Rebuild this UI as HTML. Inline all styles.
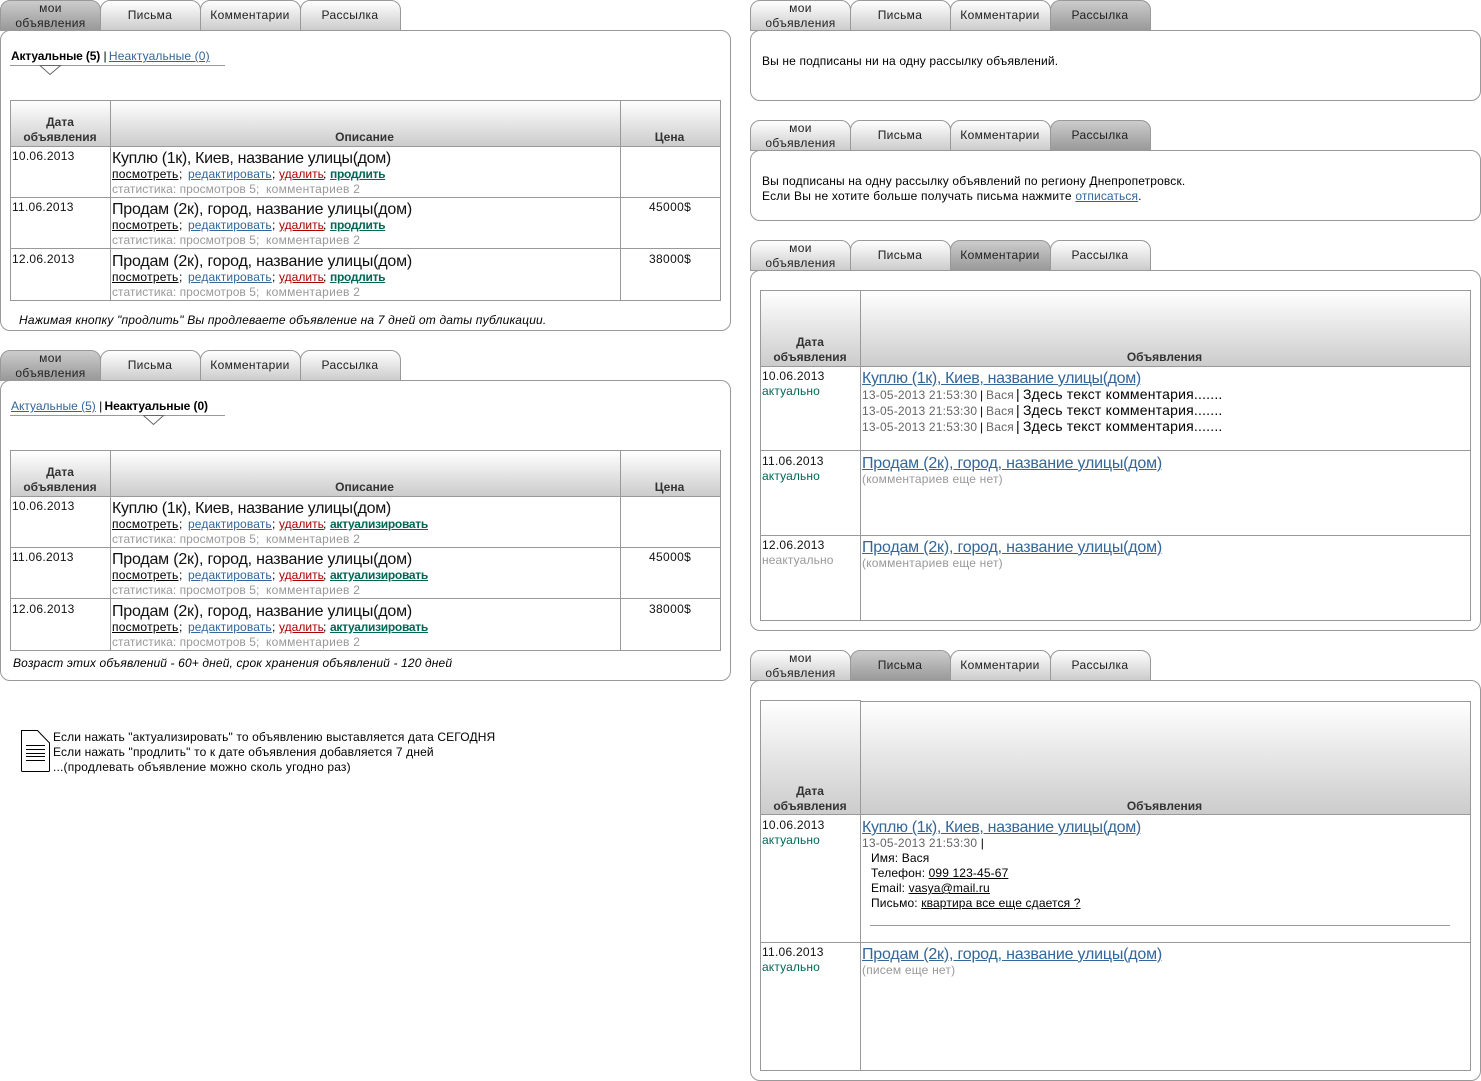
<!DOCTYPE html>
<html><head><meta charset="utf-8"><style>
html,body{margin:0;padding:0;background:#fff;width:1481px;height:1081px;overflow:hidden}
body{position:relative;font-family:"Liberation Sans",Arial,sans-serif;font-size:12px;color:#000}
.a,.tab,.p,.h,.l,.t,.d,.n,.k,.s,.x,.m,.z,.g{position:absolute;white-space:nowrap;box-sizing:border-box}
.tab{width:101px;height:31px;border:1px solid #999;border-radius:10px 10px 0 0;background:linear-gradient(#fff,#ccc);text-align:center;line-height:15px;color:#222;z-index:1;letter-spacing:.35px;padding:7px 1px 0 0}
.tab.two{padding:0}
.on{background:linear-gradient(#ccc,#999)}
.p{border:1px solid #999;border-radius:10px;background:#fff;z-index:2}
.h{background:linear-gradient(#fff,#ccc);border:1px solid #999;height:47px}
.l{background:#999}
.t{line-height:15px;z-index:3;margin-top:1px}
.d{line-height:15px;color:#111;letter-spacing:.25px;z-index:3;margin-top:1px}
.v{letter-spacing:.35px}
.c{letter-spacing:.13px}
.n{font-size:16px;line-height:18px;color:#111;z-index:3;letter-spacing:-.34px;margin-top:1px}
.n.q{letter-spacing:-.2px}
.n.u{text-decoration:underline;color:#336699}
.k{line-height:15px;text-decoration:underline;z-index:3;letter-spacing:.25px;margin-top:1px}
.k.b{letter-spacing:.13px}
.k.r{letter-spacing:.02px}
.k.g2{letter-spacing:-.3px}
.k.g4{letter-spacing:-.28px}
.s{line-height:15px;color:#999;letter-spacing:.2px;z-index:3;margin-top:1px}
.b{color:#336699}.r{color:#a80000}.g2{color:#006655;font-weight:bold}
.x{font-weight:bold;color:#333;text-align:center;line-height:15px;z-index:3;margin:1px 0 0 -1px}
.x.y{margin-left:0}
.m5{color:#666;letter-spacing:.2px}
.s i{font-style:normal;letter-spacing:.05px}
.s em{font-style:normal;letter-spacing:.28px}
.f{font-size:14px;letter-spacing:.2px}
u{text-decoration:underline}
</style></head><body>

<div class="tab two on" style="left:0;top:0">мои<br>объявления</div><div class="tab" style="left:100px;top:0">Письма</div><div class="tab" style="left:200px;top:0">Комментарии</div><div class="tab" style="left:300px;top:0">Рассылка</div>
<div class="p" style="left:0;top:30px;width:731px;height:301px"></div>
<div class="t" style="left:11px;top:48px"><b style="letter-spacing:-.15px">Актуальные (5)</b> | <u class="b" style="letter-spacing:.13px;margin-left:-1px">Неактуальные (0)</u></div>
<div class="l" style="left:10px;top:65px;width:215px;height:1px;z-index:3"></div>
<svg class="a" style="left:39px;top:65px;z-index:4" width="23" height="11"><path d="M1 0.5 H21.5 L11 9.5 Z" fill="#fff" stroke="#666"/></svg>
<div class="h" style="left:10px;top:100px;width:711px;z-index:3"></div>
<div class="l" style="left:10px;top:146px;width:711px;height:1px;z-index:3"></div>
<div class="l" style="left:10px;top:197px;width:711px;height:1px;z-index:3"></div>
<div class="l" style="left:10px;top:248px;width:711px;height:1px;z-index:3"></div>
<div class="l" style="left:10px;top:300px;width:711px;height:1px;z-index:3"></div>
<div class="l" style="left:10px;top:100px;width:1px;height:200px;z-index:3"></div>
<div class="l" style="left:110px;top:100px;width:1px;height:200px;z-index:3"></div>
<div class="l" style="left:620px;top:100px;width:1px;height:200px;z-index:3"></div>
<div class="l" style="left:720px;top:100px;width:1px;height:200px;z-index:3"></div>
<div class="x y" style="left:11px;top:114px;width:98px">Дата<br>объявления</div><div class="x" style="left:111px;top:129px;width:509px">Описание</div><div class="x" style="left:621px;top:129px;width:99px">Цена</div>

<div class="d" style="left:12px;top:148px">10.06.2013</div><div class="n" style="left:112px;top:149px">Куплю (1к), Киев, название улицы(дом)</div>
<div class="k" style="left:112px;top:166px">посмотреть</div><div class="t" style="left:179px;top:166px">;</div><div class="k b" style="left:188px;top:166px">редактировать</div><div class="t" style="left:272px;top:166px">;</div><div class="k r" style="left:279px;top:166px">удалить</div><div class="t" style="left:323px;top:166px">;</div><div class="k g2" style="left:330px;top:166px">продлить</div>
<div class="s" style="left:112px;top:181px"><i>статистика: просмотров 5;</i><span style="position:absolute;left:154px;top:0"><em>комментариев 2</em></span></div>

<div class="d" style="left:12px;top:199px">11.06.2013</div><div class="n q" style="left:112px;top:200px">Продам (2к), город, название улицы(дом)</div>
<div class="k" style="left:112px;top:217px">посмотреть</div><div class="t" style="left:179px;top:217px">;</div><div class="k b" style="left:188px;top:217px">редактировать</div><div class="t" style="left:272px;top:217px">;</div><div class="k r" style="left:279px;top:217px">удалить</div><div class="t" style="left:323px;top:217px">;</div><div class="k g2" style="left:330px;top:217px">продлить</div>
<div class="s" style="left:112px;top:232px"><i>статистика: просмотров 5;</i><span style="position:absolute;left:154px;top:0"><em>комментариев 2</em></span></div>
<div class="d v" style="left:649px;top:199px">45000$</div>

<div class="d" style="left:12px;top:251px">12.06.2013</div><div class="n q" style="left:112px;top:252px">Продам (2к), город, название улицы(дом)</div>
<div class="k" style="left:112px;top:269px">посмотреть</div><div class="t" style="left:179px;top:269px">;</div><div class="k b" style="left:188px;top:269px">редактировать</div><div class="t" style="left:272px;top:269px">;</div><div class="k r" style="left:279px;top:269px">удалить</div><div class="t" style="left:323px;top:269px">;</div><div class="k g2" style="left:330px;top:269px">продлить</div>
<div class="s" style="left:112px;top:284px"><i>статистика: просмотров 5;</i><span style="position:absolute;left:154px;top:0"><em>комментариев 2</em></span></div>
<div class="d v" style="left:649px;top:251px">38000$</div>
<div class="t" style="left:19px;top:312px;font-style:italic;letter-spacing:.175px">Нажимая кнопку "продлить" Вы продлеваете объявление на 7 дней от даты публикации.</div>

<div class="tab two on" style="left:0;top:350px">мои<br>объявления</div><div class="tab" style="left:100px;top:350px">Письма</div><div class="tab" style="left:200px;top:350px">Комментарии</div><div class="tab" style="left:300px;top:350px">Рассылка</div>
<div class="p" style="left:0;top:380px;width:731px;height:301px"></div>
<div class="t" style="left:11px;top:398px"><u class="b" style="letter-spacing:0">Актуальные (5)</u> | <b style="letter-spacing:-.07px;margin-left:-1px">Неактуальные (0)</b></div>
<div class="l" style="left:10px;top:415px;width:215px;height:1px;z-index:3"></div>
<svg class="a" style="left:143px;top:415px;z-index:4" width="23" height="11"><path d="M0.5 0.5 H20.5 L10.5 9.5 Z" fill="#fff" stroke="#666"/></svg>
<div class="h" style="left:10px;top:450px;width:711px;z-index:3"></div>
<div class="l" style="left:10px;top:496px;width:711px;height:1px;z-index:3"></div>
<div class="l" style="left:10px;top:547px;width:711px;height:1px;z-index:3"></div>
<div class="l" style="left:10px;top:598px;width:711px;height:1px;z-index:3"></div>
<div class="l" style="left:10px;top:650px;width:711px;height:1px;z-index:3"></div>
<div class="l" style="left:10px;top:450px;width:1px;height:200px;z-index:3"></div>
<div class="l" style="left:110px;top:450px;width:1px;height:200px;z-index:3"></div>
<div class="l" style="left:620px;top:450px;width:1px;height:200px;z-index:3"></div>
<div class="l" style="left:720px;top:450px;width:1px;height:200px;z-index:3"></div>
<div class="x y" style="left:11px;top:464px;width:98px">Дата<br>объявления</div><div class="x" style="left:111px;top:479px;width:509px">Описание</div><div class="x" style="left:621px;top:479px;width:99px">Цена</div>

<div class="d" style="left:12px;top:498px">10.06.2013</div><div class="n" style="left:112px;top:499px">Куплю (1к), Киев, название улицы(дом)</div>
<div class="k" style="left:112px;top:516px">посмотреть</div><div class="t" style="left:179px;top:516px">;</div><div class="k b" style="left:188px;top:516px">редактировать</div><div class="t" style="left:272px;top:516px">;</div><div class="k r" style="left:279px;top:516px">удалить</div><div class="t" style="left:323px;top:516px">;</div><div class="k g2 g4" style="left:330px;top:516px">актуализировать</div>
<div class="s" style="left:112px;top:531px"><i>статистика: просмотров 5;</i><span style="position:absolute;left:154px;top:0"><em>комментариев 2</em></span></div>

<div class="d" style="left:12px;top:549px">11.06.2013</div><div class="n q" style="left:112px;top:550px">Продам (2к), город, название улицы(дом)</div>
<div class="k" style="left:112px;top:567px">посмотреть</div><div class="t" style="left:179px;top:567px">;</div><div class="k b" style="left:188px;top:567px">редактировать</div><div class="t" style="left:272px;top:567px">;</div><div class="k r" style="left:279px;top:567px">удалить</div><div class="t" style="left:323px;top:567px">;</div><div class="k g2 g4" style="left:330px;top:567px">актуализировать</div>
<div class="s" style="left:112px;top:582px"><i>статистика: просмотров 5;</i><span style="position:absolute;left:154px;top:0"><em>комментариев 2</em></span></div>
<div class="d v" style="left:649px;top:549px">45000$</div>

<div class="d" style="left:12px;top:601px">12.06.2013</div><div class="n q" style="left:112px;top:602px">Продам (2к), город, название улицы(дом)</div>
<div class="k" style="left:112px;top:619px">посмотреть</div><div class="t" style="left:179px;top:619px">;</div><div class="k b" style="left:188px;top:619px">редактировать</div><div class="t" style="left:272px;top:619px">;</div><div class="k r" style="left:279px;top:619px">удалить</div><div class="t" style="left:323px;top:619px">;</div><div class="k g2 g4" style="left:330px;top:619px">актуализировать</div>
<div class="s" style="left:112px;top:634px"><i>статистика: просмотров 5;</i><span style="position:absolute;left:154px;top:0"><em>комментариев 2</em></span></div>
<div class="d v" style="left:649px;top:601px">38000$</div>
<div class="t" style="left:13px;top:655px;font-style:italic;letter-spacing:.14px">Возраст этих объявлений - 60+ дней, срок хранения объявлений - 120 дней</div>

<svg class="a" style="left:19px;top:729px" width="32" height="44"><path d="M2.5 1.5 H18.5 L30.5 14 V41.5 Q30.5 42.5 29.5 42.5 H3.5 Q2.5 42.5 2.5 41.5 Z" fill="#fff" stroke="#000"/><path d="M7 16.5H26M7 20.5H26M7 24.5H26M7 27.5H26M7 31.5H26" stroke="#000" fill="none"/></svg>
<div class="t" style="left:53px;top:729px;letter-spacing:.13px">Если нажать "актуализировать" то объявлению выставляется дата СЕГОДНЯ</div>
<div class="t" style="left:53px;top:744px;letter-spacing:.15px">Если нажать "продлить" то к дате объявления добавляется 7 дней</div>
<div class="t" style="left:53px;top:759px;letter-spacing:.18px">...(продлевать объявление можно сколь угодно раз)</div>

<div class="tab two" style="left:750px;top:0">мои<br>объявления</div><div class="tab" style="left:850px;top:0">Письма</div><div class="tab" style="left:950px;top:0">Комментарии</div><div class="tab on" style="left:1050px;top:0">Рассылка</div>
<div class="p" style="left:750px;top:30px;width:731px;height:71px"></div>
<div class="t" style="left:762px;top:53px;letter-spacing:.14px">Вы не подписаны ни на одну рассылку объявлений.</div>

<div class="tab two" style="left:750px;top:120px">мои<br>объявления</div><div class="tab" style="left:850px;top:120px">Письма</div><div class="tab" style="left:950px;top:120px">Комментарии</div><div class="tab on" style="left:1050px;top:120px">Рассылка</div>
<div class="p" style="left:750px;top:150px;width:731px;height:71px"></div>
<div class="t" style="left:762px;top:173px;letter-spacing:.145px">Вы подписаны на одну рассылку объявлений по региону Днепропетровск.</div>
<div class="t" style="left:762px;top:188px;letter-spacing:.22px">Если Вы не хотите больше получать письма нажмите <u class="b" style="letter-spacing:.1px">отписаться</u>.</div>

<div class="tab two" style="left:750px;top:240px">мои<br>объявления</div><div class="tab" style="left:850px;top:240px">Письма</div><div class="tab on" style="left:950px;top:240px">Комментарии</div><div class="tab" style="left:1050px;top:240px">Рассылка</div>
<div class="p" style="left:750px;top:270px;width:731px;height:361px"></div>
<div class="h" style="left:760px;top:290px;width:711px;height:77px;z-index:3"></div>
<div class="l" style="left:760px;top:450px;width:711px;height:1px;z-index:3"></div>
<div class="l" style="left:760px;top:535px;width:711px;height:1px;z-index:3"></div>
<div class="l" style="left:760px;top:620px;width:711px;height:1px;z-index:3"></div>
<div class="l" style="left:760px;top:290px;width:1px;height:330px;z-index:3"></div>
<div class="l" style="left:860px;top:290px;width:1px;height:330px;z-index:3"></div>
<div class="l" style="left:1470px;top:290px;width:1px;height:330px;z-index:3"></div>
<div class="x y" style="left:761px;top:334px;width:98px">Дата<br>объявления</div><div class="x" style="left:861px;top:349px;width:609px">Объявления</div>

<div class="d" style="left:762px;top:368px">10.06.2013</div><div class="d c" style="left:762px;top:383px;color:#006655">актуально</div>
<div class="n u" style="left:862px;top:369px">Куплю (1к), Киев, название улицы(дом)</div>
<div class="t m5" style="left:862px;top:387px">13-05-2013 21:53:30</div><div class="t" style="left:980px;top:387px">|</div><div class="t m5" style="left:986px;top:387px">Вася</div><div class="t f" style="left:1016px;top:386px">|</div><div class="t f" style="left:1023px;top:386px">Здесь текст комментария.......</div>
<div class="t m5" style="left:862px;top:403px">13-05-2013 21:53:30</div><div class="t" style="left:980px;top:403px">|</div><div class="t m5" style="left:986px;top:403px">Вася</div><div class="t f" style="left:1016px;top:402px">|</div><div class="t f" style="left:1023px;top:402px">Здесь текст комментария.......</div>
<div class="t m5" style="left:862px;top:419px">13-05-2013 21:53:30</div><div class="t" style="left:980px;top:419px">|</div><div class="t m5" style="left:986px;top:419px">Вася</div><div class="t f" style="left:1016px;top:418px">|</div><div class="t f" style="left:1023px;top:418px">Здесь текст комментария.......</div>

<div class="d" style="left:762px;top:453px">11.06.2013</div><div class="d c" style="left:762px;top:468px;color:#006655">актуально</div>
<div class="n u q" style="left:862px;top:454px">Продам (2к), город, название улицы(дом)</div>
<div class="s" style="left:862px;top:471px">(комментариев еще нет)</div>

<div class="d" style="left:762px;top:537px">12.06.2013</div><div class="d c" style="left:762px;top:552px;color:#999">неактуально</div>
<div class="n u q" style="left:862px;top:538px">Продам (2к), город, название улицы(дом)</div>
<div class="s" style="left:862px;top:555px">(комментариев еще нет)</div>

<div class="tab two" style="left:750px;top:650px">мои<br>объявления</div><div class="tab on" style="left:850px;top:650px">Письма</div><div class="tab" style="left:950px;top:650px">Комментарии</div><div class="tab" style="left:1050px;top:650px">Рассылка</div>
<div class="p" style="left:750px;top:680px;width:731px;height:401px"></div>
<div class="h" style="left:760px;top:700px;width:101px;height:115px;z-index:3"></div>
<div class="h" style="left:860px;top:701px;width:611px;height:114px;z-index:3"></div>
<div class="l" style="left:760px;top:942px;width:711px;height:1px;z-index:3"></div>
<div class="l" style="left:760px;top:1070px;width:711px;height:1px;z-index:3"></div>
<div class="l" style="left:760px;top:700px;width:1px;height:370px;z-index:3"></div>
<div class="l" style="left:860px;top:700px;width:1px;height:370px;z-index:3"></div>
<div class="l" style="left:1470px;top:701px;width:1px;height:369px;z-index:3"></div>
<div class="x y" style="left:761px;top:783px;width:98px;z-index:4">Дата<br>объявления</div><div class="x" style="left:861px;top:798px;width:609px;z-index:4">Объявления</div>

<div class="d" style="left:762px;top:817px">10.06.2013</div><div class="d c" style="left:762px;top:832px;color:#006655">актуально</div>
<div class="n u" style="left:862px;top:818px">Куплю (1к), Киев, название улицы(дом)</div>
<div class="t m5" style="left:862px;top:835px">13-05-2013 21:53:30 <span style="color:#000">|</span></div>
<div class="t" style="left:871px;top:850px;letter-spacing:.13px">Имя: Вася<br>Телефон: <u>099 123-45-67</u><br>Email: <u>vasya@mail.ru</u><br>Письмо: <u>квартира все еще сдается ?</u></div>
<div class="l" style="left:870px;top:925px;width:580px;height:1px;z-index:3"></div>

<div class="d" style="left:762px;top:944px">11.06.2013</div><div class="d c" style="left:762px;top:959px;color:#006655">актуально</div>
<div class="n u q" style="left:862px;top:945px">Продам (2к), город, название улицы(дом)</div>
<div class="s" style="left:862px;top:962px">(писем еще нет)</div>

</body></html>
